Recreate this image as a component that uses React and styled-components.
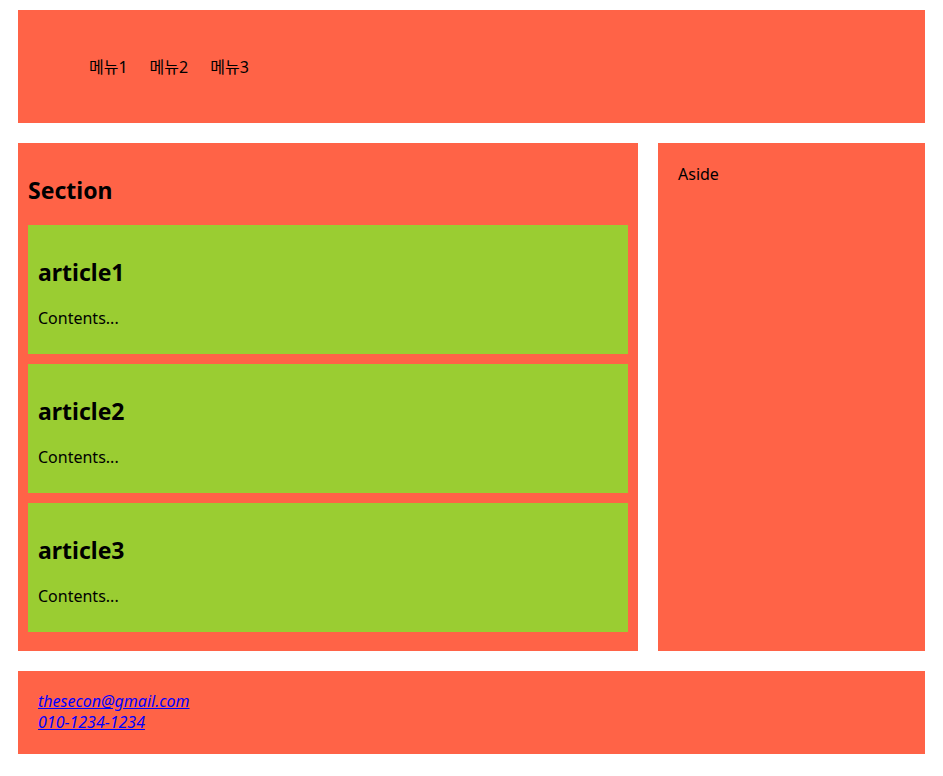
import React from 'react'
import styled, { createGlobalStyle } from 'styled-components'

const GlobalStyle = createGlobalStyle`
  body {
    margin: 0;
    font-family: "Noto Sans", "Noto Sans CJK KR", sans-serif;
    background: #fff;
    color: #000;
  }
`

const Wrapper = styled.div`
  padding: 10px 18px;
  display: flex;
  flex-direction: column;
  gap: 20px;
`

const Header = styled.header`
  background-color: tomato;
  padding: 47px 0 45px 71px;
`

const Menu = styled.ul`
  list-style: none;
  margin: 0;
  padding: 0;
  display: flex;
  gap: 22px;

  li {
    font-size: 16px;
    line-height: 21px;
  }
`

const Main = styled.div`
  display: flex;
  gap: 20px;
  align-items: stretch;
`

const Section = styled.section`
  background-color: tomato;
  width: 620px;
  padding: 10px 10px 9px;
  box-sizing: border-box;
`

const Title = styled.h2`
  font-size: 23px;
  line-height: 32px;
  font-weight: 700;
  margin: ${(p) => (p.$main ? '21px 0 19px' : '20px 0')};
`

const Article = styled.article`
  background-color: yellowgreen;
  padding: 10px;
  margin-bottom: 10px;

  h2 {
    position: relative;
    top: 1px;
  }

  p {
    margin: 20px 0 16px;
    font-size: 16px;
    line-height: 21px;
    position: relative;
    top: 1px;
  }
`

const Aside = styled.aside`
  background-color: tomato;
  flex: 1;
  padding: 21px 20px 19px;
  font-size: 16px;
  line-height: 21px;
`

const Footer = styled.footer`
  background-color: tomato;
  padding: 20px 20px 21px;

  address {
    font-size: 16px;
    line-height: 21px;
  }

  a {
    color: blue;
    display: block;
  }
`

function App() {
  const articles = ['article1', 'article2', 'article3']

  return (
    <>
      <GlobalStyle />
      <Wrapper>
        <Header>
          <nav>
            <Menu>
              <li>메뉴1</li>
              <li>메뉴2</li>
              <li>메뉴3</li>
            </Menu>
          </nav>
        </Header>
        <Main>
          <Section>
            <Title $main>Section</Title>
            {articles.map((name) => (
              <Article key={name}>
                <Title>{name}</Title>
                <p>Contents...</p>
              </Article>
            ))}
          </Section>
          <Aside>Aside</Aside>
        </Main>
        <Footer>
          <address>
            <a href="mailto:thesecon@gmail.com">thesecon@gmail.com</a>
            <a href="tel:010-1234-1234">010-1234-1234</a>
          </address>
        </Footer>
      </Wrapper>
    </>
  )
}

export default App
